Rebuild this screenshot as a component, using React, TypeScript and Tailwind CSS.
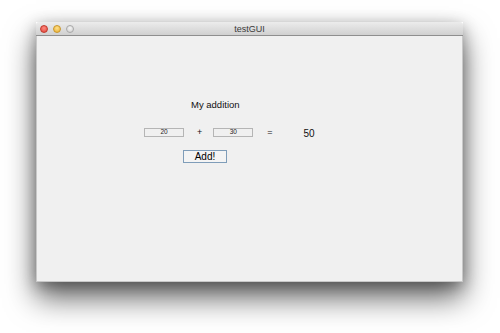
import React from "react";

const font = { fontFamily: '"Liberation Sans", Arial, sans-serif' };

export default function App() {
  return (
    <div className="h-[333px] w-[500px] overflow-hidden bg-white pl-[36px] pt-[22px]" style={font}>
      <div className="flex h-[260px] w-[427px] flex-col shadow-[0_16px_28px_rgba(0,0,0,0.6),0_4px_14px_rgba(0,0,0,0.3)]">
        {/* title bar */}
        <div className="relative flex h-[14px] items-center rounded-t-[3px] border-b border-[#8e8e8e] bg-gradient-to-b from-[#ececec] to-[#d0d0d0] pl-[4px]">
          <div className="flex gap-[5px]">
            <span className="block h-[8px] w-[8px] rounded-full border border-[#c0392b] bg-[radial-gradient(circle_at_50%_35%,#ff8a80,#e0443a)]" />
            <span className="block h-[8px] w-[8px] rounded-full border border-[#c9962a] bg-[radial-gradient(circle_at_50%_35%,#ffe08a,#e8ae30)]" />
            <span className="block h-[8px] w-[8px] rounded-full border border-[#a8a8a8] bg-[radial-gradient(circle_at_50%_35%,#f4f4f4,#cdcdcd)]" />
          </div>
          <span className="absolute left-0 right-0 top-[1px] text-center text-[9px] leading-[12px] text-[#3a3a3a]">
            testGUI
          </span>
        </div>
        {/* content */}
        <div className="flex-1 border-x border-b border-[#c8c8c8] bg-[#f0f0f0] pt-[63px] text-[#111]">
          <div className="ml-[154px] text-[9.5px] leading-[12px]">My addition</div>
          <div className="mt-[16px] flex h-[10px] items-center">
            <div className="ml-[107px] flex h-[9px] w-[40px] items-center justify-center border border-[#b5b5b5] bg-[#f0f0f0] text-[6.5px] leading-none text-[#222]">
              20
            </div>
            <span className="ml-[13px] text-[9px] leading-none text-[#111]">+</span>
            <div className="ml-[11px] flex h-[9px] w-[40px] items-center justify-center border border-[#b5b5b5] bg-[#f0f0f0] text-[6.5px] leading-none text-[#222]">
              30
            </div>
            <span className="ml-[14px] text-[9px] leading-none text-[#111]">=</span>
            <span className="ml-[31px] mt-[3px] text-[10px] leading-none text-[#111]">50</span>
          </div>
          <button className="ml-[146px] mt-[13px] flex h-[13px] w-[44px] items-center justify-center border border-[#7f9db9] bg-[#f4f4f4] text-[10px] leading-none text-black">
            Add!
          </button>
        </div>
      </div>
    </div>
  );
}
